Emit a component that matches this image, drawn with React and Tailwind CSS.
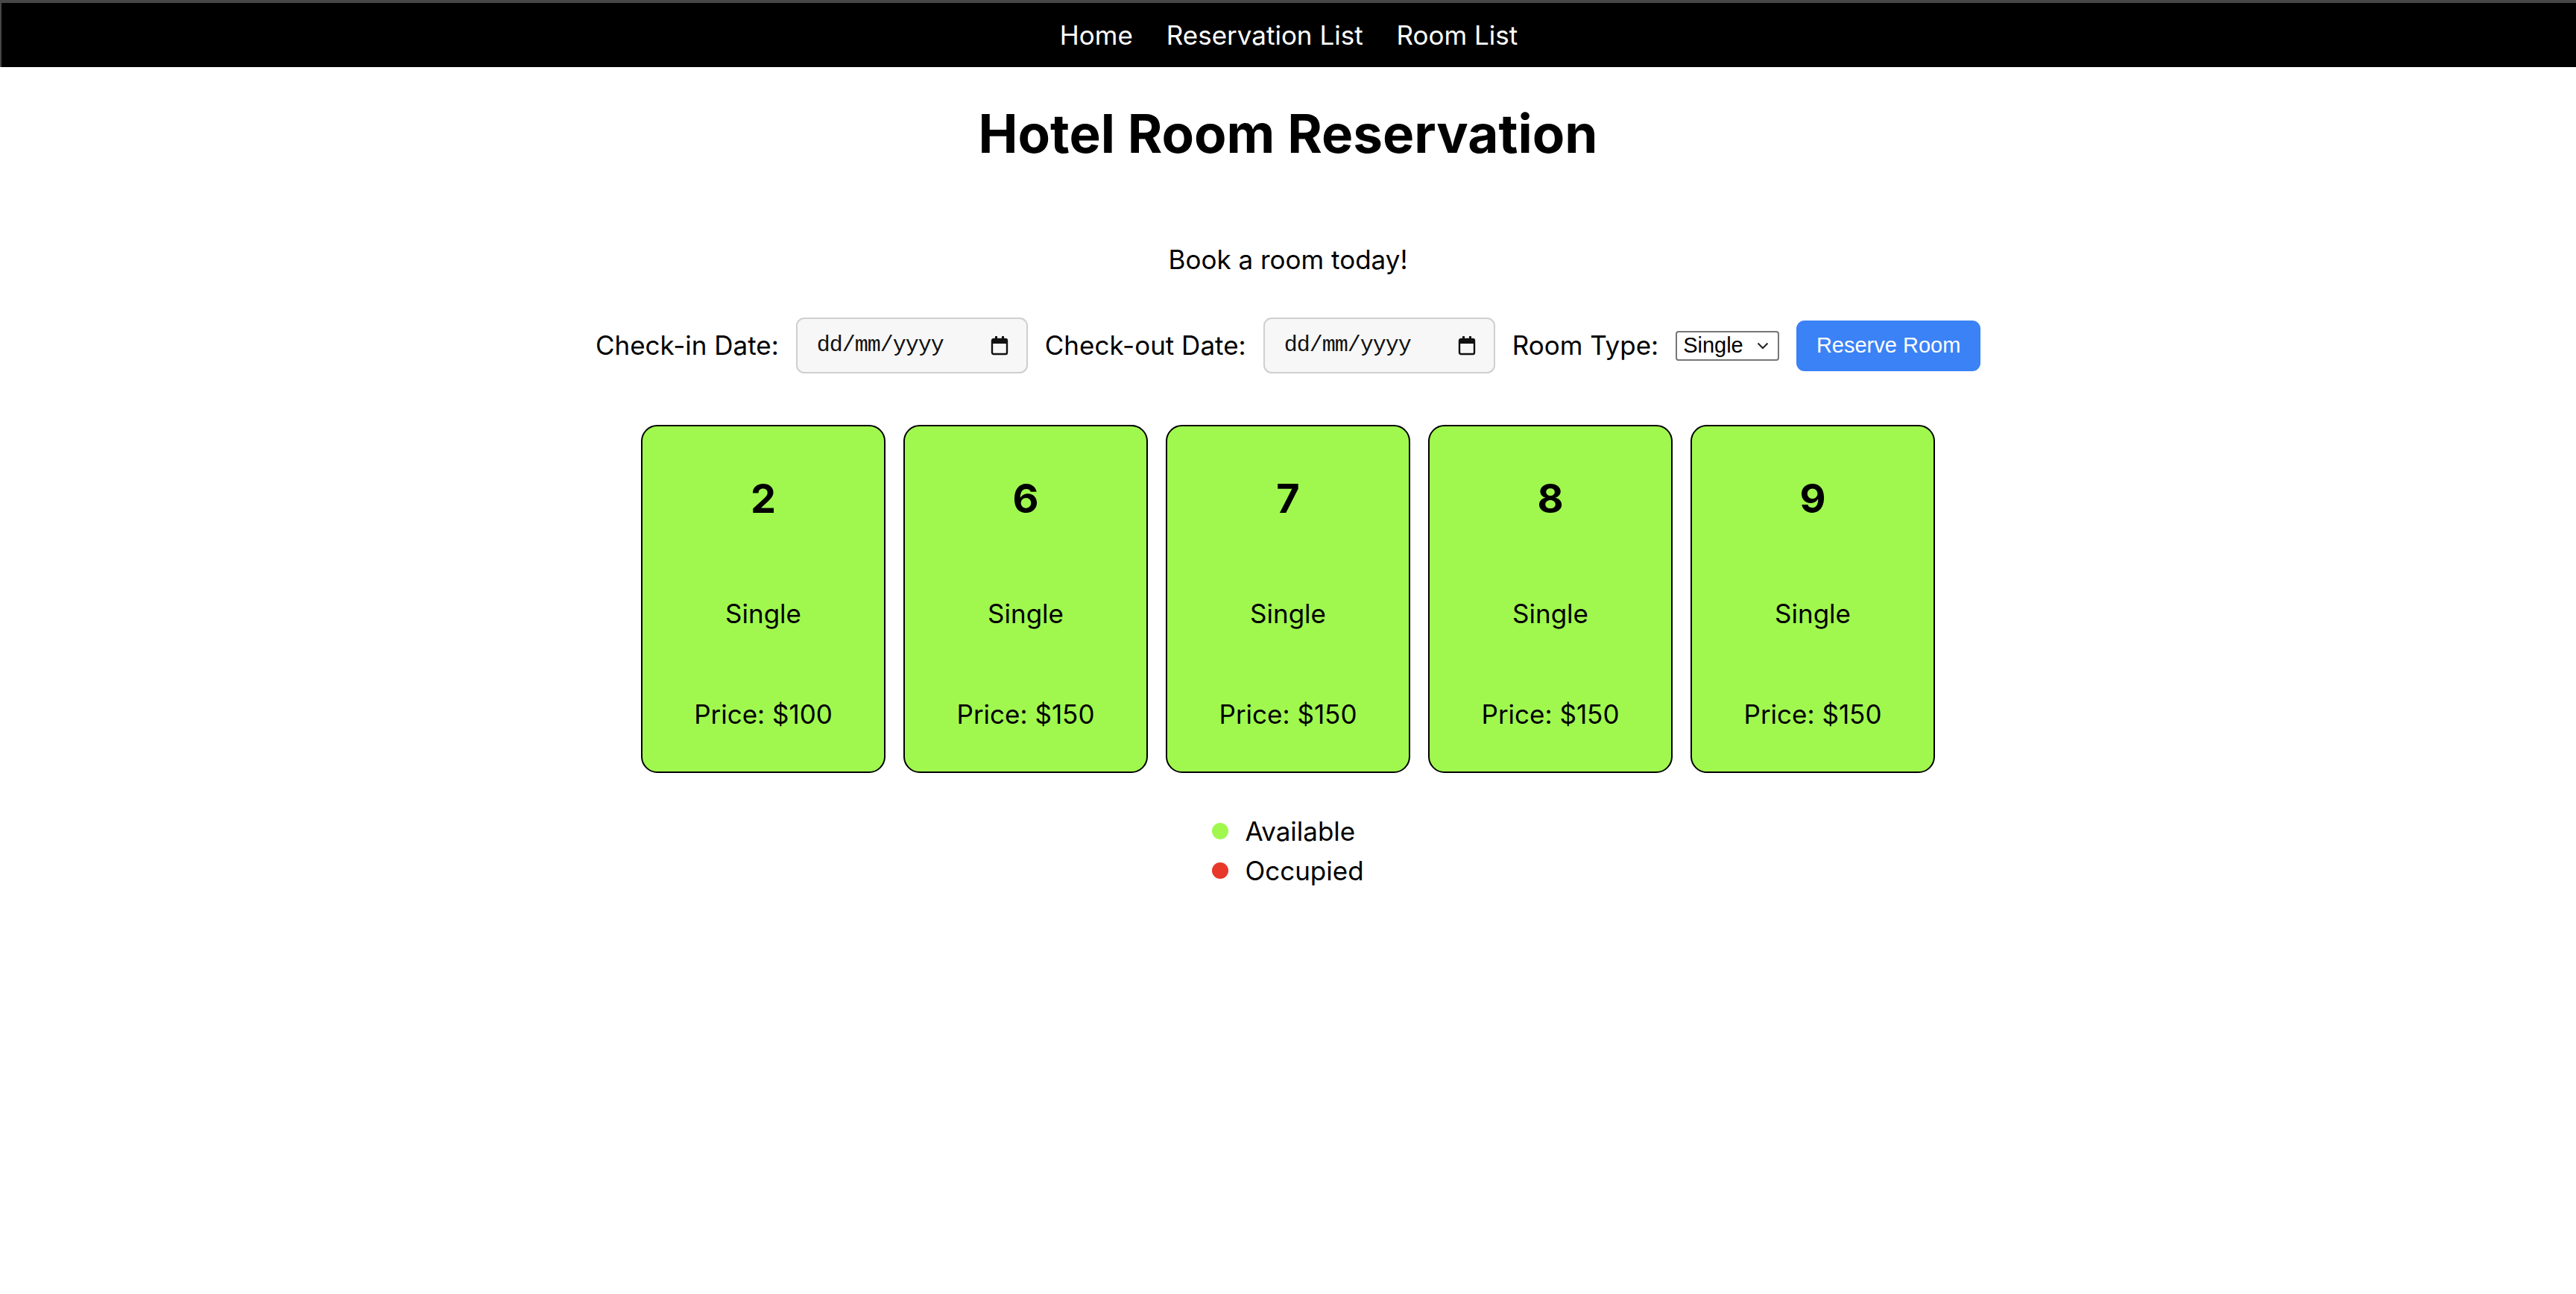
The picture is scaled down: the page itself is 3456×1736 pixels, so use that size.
import React from 'react';

const rooms = [
  { number: 2, type: 'Single', price: 100 },
  { number: 6, type: 'Single', price: 150 },
  { number: 7, type: 'Single', price: 150 },
  { number: 8, type: 'Single', price: 150 },
  { number: 9, type: 'Single', price: 150 },
];

const CalendarIcon = () => (
  <svg width="24" height="26" viewBox="0 0 24 26" fill="none">
    <rect x="6" y="0" width="3" height="5" fill="#111" />
    <rect x="15" y="0" width="3" height="5" fill="#111" />
    <rect x="2" y="4" width="20" height="20" rx="2" stroke="#111" strokeWidth="2.4" />
    <rect x="2" y="4" width="20" height="6" fill="#111" />
  </svg>
);

const DateField = () => (
  <div className="w-[311px] h-[75px] bg-[#f7f7f7] border-2 border-[#cfcfcf] rounded-[11px] flex items-center justify-between pl-[26px] pr-[24px]">
    <span className="font-['Liberation_Mono',monospace] text-[30px] text-[#111] tracking-[-1px]">dd/mm/yyyy</span>
    <CalendarIcon />
  </div>
);

const RoomCard = ({ room }) => (
  <div className="w-[328px] h-[467px] bg-[#a0f84f] border-2 border-black rounded-[22px] flex flex-col items-center pt-[65px]">
    <div className="text-[54px] font-bold leading-[64px]">{room.number}</div>
    <div className="text-[35px] leading-[42px] mt-[101px]">{room.type}</div>
    <div className="text-[35px] leading-[42px] mt-[93px]">Price: ${room.price}</div>
  </div>
);

export default function App() {
  return (
    <div className="min-h-screen bg-white text-black font-['Inter',sans-serif]">
      {/* top nav */}
      <nav className="h-[90px] bg-black border-t-4 border-l-2 border-[#474747] flex items-center justify-center gap-[45px] text-white text-[35px]">
        <a className="cursor-pointer">Home</a>
        <a className="cursor-pointer">Reservation List</a>
        <a className="cursor-pointer">Room List</a>
      </nav>

      <main className="flex flex-col items-center">
        <h1 className="mt-[46px] text-[71px] font-bold leading-[86px]">Hotel Room Reservation</h1>
        <p className="mt-[105px] text-[35px] leading-[42px]">Book a room today!</p>

        {/* reservation form */}
        <div className="mt-[57px] h-[75px] flex items-center gap-[23px]">
          <label className="text-[35px]">Check-in Date:</label>
          <DateField />
          <label className="text-[35px]">Check-out Date:</label>
          <DateField />
          <label className="text-[35px]">Room Type:</label>
          <div className="w-[139px] h-[40px] border-2 border-[#767676] rounded-[4px] flex items-center justify-between pl-[8px] pr-[12px] font-['Liberation_Sans',sans-serif] text-[29px]">
            <span>Single</span>
            <svg width="16" height="10" viewBox="0 0 16 10" fill="none">
              <path d="M1.5 1.5 L8 8 L14.5 1.5" stroke="#222" strokeWidth="2" />
            </svg>
          </div>
          <button className="w-[247px] h-[68px] bg-[#3b82f6] text-white rounded-[11px] font-['Liberation_Sans',sans-serif] text-[29px]">
            Reserve Room
          </button>
        </div>

        {/* rooms */}
        <div className="mt-[69px] flex gap-[24px]">
          {rooms.map((room) => (
            <RoomCard key={room.number} room={room} />
          ))}
        </div>

        {/* legend */}
        <div className="mt-[57px] flex flex-col gap-[11px] text-[35px]">
          <div className="flex items-center gap-[22px] leading-[42px]">
            <span className="w-[22px] h-[22px] rounded-full bg-[#a0f84f]" />
            <span>Available</span>
          </div>
          <div className="flex items-center gap-[22px] leading-[42px]">
            <span className="w-[22px] h-[22px] rounded-full bg-[#e8382a]" />
            <span>Occupied</span>
          </div>
        </div>
      </main>
    </div>
  );
}
